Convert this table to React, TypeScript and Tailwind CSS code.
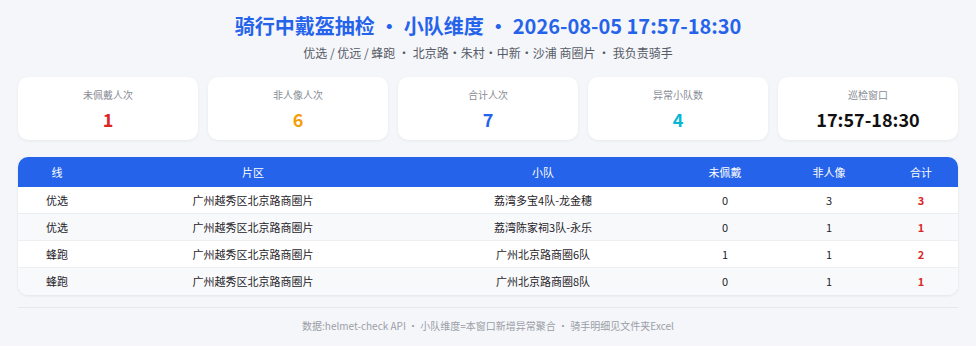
import React from 'react'

const font = { fontFamily: '"Noto Sans CJK SC", "Noto Sans", sans-serif' }

const stats = [
  { label: '未佩戴人次', value: '1', cls: 'text-[#dc2626]' },
  { label: '非人像人次', value: '6', cls: 'text-[#f59e0b]' },
  { label: '合计人次', value: '7', cls: 'text-[#2563eb]' },
  { label: '异常小队数', value: '4', cls: 'text-[#06b6d4]' },
  { label: '巡检窗口', value: '17:57-18:30', cls: 'text-[#111111]' },
]

const rows = [
  { line: '优选', area: '广州越秀区北京路商圈片', team: '荔湾多宝4队-龙金穗', a: 0, b: 3, t: 3 },
  { line: '优选', area: '广州越秀区北京路商圈片', team: '荔湾陈家祠3队-永乐', a: 0, b: 1, t: 1 },
  { line: '蜂跑', area: '广州越秀区北京路商圈片', team: '广州北京路商圈6队', a: 1, b: 1, t: 2 },
  { line: '蜂跑', area: '广州越秀区北京路商圈片', team: '广州北京路商圈8队', a: 0, b: 1, t: 1 },
]

const cols = 'grid grid-cols-[78px_314px_266px_98px_110px_74px]'

export default function App() {
  return (
    <div className="w-[976px] h-[346px] bg-[#f5f6fa] px-[18px] pt-[12px]" style={font}>
      {/* Header */}
      <div className="text-center">
        <h1 className="text-[20px] leading-[28px] font-bold text-[#2563eb]">
          骑行中戴盔抽检 · 小队维度 · 2026-08-05 17:57-18:30
        </h1>
        <p className="mt-[4px] text-[12px] leading-[18px] text-[#555b66]">
          优选 / 优远 / 蜂跑 · 北京路・朱村・中新・沙浦 商圈片 · 我负责骑手
        </p>
      </div>

      {/* Summary cards */}
      <div className="mt-[15px] grid grid-cols-5 gap-[10px]">
        {stats.map(s => (
          <div key={s.label} className="h-[63px] rounded-[10px] bg-white shadow-[0_1px_3px_rgba(0,0,0,0.06)] flex flex-col items-center pt-[10px]">
            <p className="text-[10px] leading-[16px] text-[#888c94]">{s.label}</p>
            <p className={`mt-[4px] text-[18px] leading-[24px] font-bold ${s.cls}`}>{s.value}</p>
          </div>
        ))}
      </div>

      {/* Table */}
      <div className="mt-[17px] rounded-[10px] bg-white overflow-hidden shadow-[0_1px_3px_rgba(0,0,0,0.08)]">
        <div className={`${cols} h-[30px] items-center bg-[#2563eb] text-white text-[11px] text-center`}>
          {['线', '片区', '小队', '未佩戴', '非人像', '合计'].map(h => (
            <div key={h}>{h}</div>
          ))}
        </div>
        {rows.map((r, i) => (
          <div
            key={r.team}
            className={`${cols} h-[27px] items-center text-[11px] text-center text-[#1f2329] ${i % 2 ? 'bg-[#f8f9fb]' : 'bg-white'} ${i < rows.length - 1 ? 'border-b border-[#eceef2]' : ''}`}
          >
            <div>{r.line}</div>
            <div>{r.area}</div>
            <div>{r.team}</div>
            <div>{r.a}</div>
            <div>{r.b}</div>
            <div className="font-bold text-[#dc2626]">{r.t}</div>
          </div>
        ))}
      </div>

      {/* Footer */}
      <div className="mt-[12px] border-t border-[#e6e8ed] pt-[10px] text-center text-[10px] leading-[16px] text-[#9a9ea6]">
        数据:helmet-check API · 小队维度=本窗口新增异常聚合 · 骑手明细见文件夹Excel
      </div>
    </div>
  )
}
